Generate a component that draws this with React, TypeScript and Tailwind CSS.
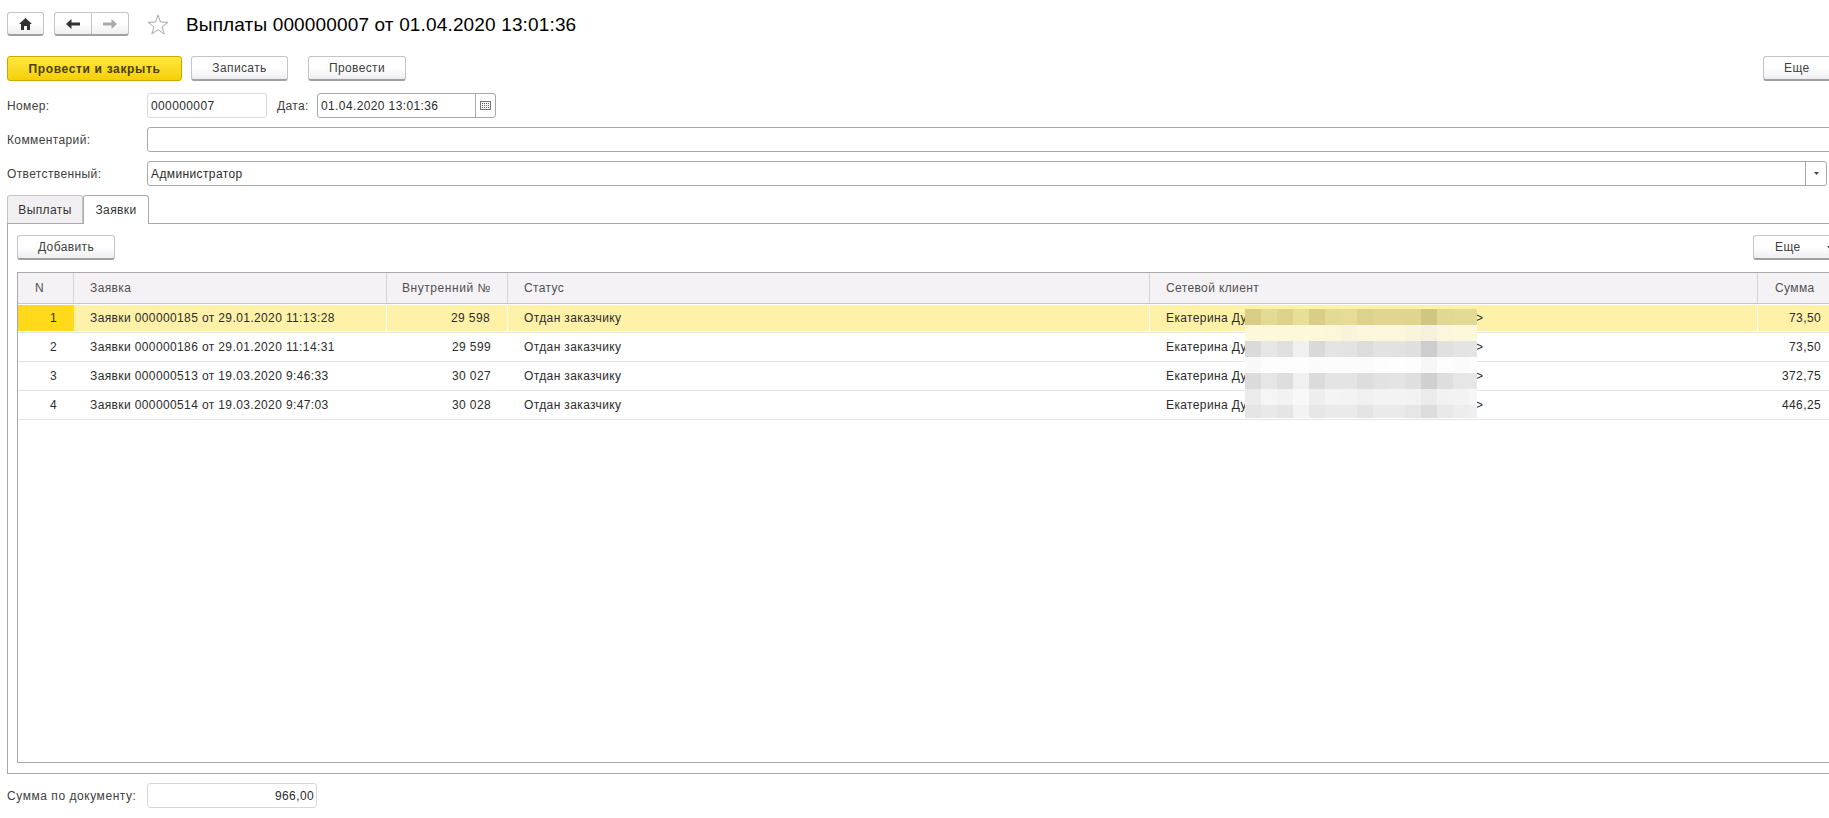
import React from 'react';

const font = "font-['Liberation_Sans',Arial,sans-serif]";

const rows = [
    { n: '1', doc: 'Заявки 000000185 от 29.01.2020 11:13:28', num: '29 598', sum: '73,50', active: true },
    { n: '2', doc: 'Заявки 000000186 от 29.01.2020 11:14:31', num: '29 599', sum: '73,50', active: false },
    { n: '3', doc: 'Заявки 000000513 от 19.03.2020 9:46:33', num: '30 027', sum: '372,75', active: false },
    { n: '4', doc: 'Заявки 000000514 от 19.03.2020 9:47:03', num: '30 028', sum: '446,25', active: false },
];

// замазанная часть имени клиента
const mosaic = [
    ['#d8cd85', '#e3da95', '#dcd28a', '#e8df97', '#d8ce86', '#e3da95', '#e6dc96', '#dcd28c', '#e0d692', '#e0d692', '#dfd58f', '#cfc684', '#e1d895', '#e3da96', '#e3da96'],
    ['#fdf8da', '#fdf8da', '#fdf8da', '#fdf8da', '#fdf8da', '#fcf7da', '#f8f3da', '#fcf7dc', '#fcf7dc', '#fbf6dc', '#f9f5dc', '#f5f1dc', '#fcf7dc', '#fdf8da', '#fdf8da'],
    ['#dadada', '#e6e6e6', '#e0e0e0', '#f0f0f0', '#d9d9d9', '#e4e4e4', '#e3e3e3', '#dcdcdc', '#e2e2e2', '#e2e2e2', '#dfdfdf', '#cdcdcd', '#e0e0e0', '#e4e4e4', '#e4e4e4'],
    ['#f8f8f8', '#fdfdfd', '#fdfdfd', '#fdfdfd', '#fbfbfb', '#fcfcfc', '#fcfcfc', '#fbfbfb', '#fdfdfd', '#fefefe', '#fdfdfd', '#f7f7f7', '#fdfdfd', '#fbfbfb', '#fdfdfd'],
    ['#dbdbdb', '#e6e6e6', '#dedede', '#f0f0f0', '#dbdbdb', '#e4e4e4', '#e4e4e4', '#dddddd', '#e2e2e2', '#e4e4e4', '#dfdfdf', '#d0d0d0', '#dedede', '#e6e6e6', '#e6e6e6'],
    ['#ececec', '#f5f5f5', '#f2f2f2', '#f8f8f8', '#eeeeee', '#f4f4f4', '#f3f3f3', '#f0f0f0', '#f3f3f3', '#f3f3f3', '#f2f2f2', '#ebebeb', '#f2f2f2', '#f3f3f3', '#f6f6f6'],
    ['#e5e5e5', '#e9e9e9', '#e5e5e5', '#f3f3f3', '#e7e7e7', '#eaeaea', '#eaeaea', '#e4e4e4', '#eaeaea', '#eaeaea', '#e6e6e6', '#dcdcdc', '#e9e9e9', '#ededed', '#efefef'],
];

function Btn({ children, className = '' }: { children: React.ReactNode; className?: string }) {
    return (
        <div className={`h-[25px] shrink-0 flex items-center justify-center border border-[#c4c4c4] border-b-2 border-b-[#a0a0a0] rounded-[3px] bg-gradient-to-b from-white via-white to-[#efedf0] text-[#404040] ${className}`}>
            {children}
        </div>
    );
}

function Field({ children, className = '' }: { children?: React.ReactNode; className?: string }) {
    return (
        <div className={`h-[25px] flex items-center pl-[3px] border border-[#a9a9a9] rounded-[3px] bg-white text-[#2c2c2c] ${className}`}>
            {children}
        </div>
    );
}

export default function App() {
    return (
        <div className={`w-[1829px] h-[818px] overflow-hidden bg-white text-[12px] leading-none tracking-[0.38px] ${font}`}>
            <div className="w-[1860px] pl-[7px]">
                {/* Шапка */}
                <div className="h-[56px] pt-[12px] flex items-start">
                    <Btn className="!h-[24px] w-[37px]">
                        <svg width="13" height="12" viewBox="0 0 13 12">
                            <path d="M6.5 0 L13 6 H11 V12 H8 V8 H5 V12 H2 V6 H0 Z" fill="#333" />
                        </svg>
                    </Btn>
                    <div className="ml-[10px] h-[24px] w-[75px] flex border border-[#c4c4c4] border-b-2 border-b-[#a0a0a0] rounded-[3px] bg-gradient-to-b from-white via-white to-[#efedf0]">
                        <div className="w-[37px] flex items-center justify-center border-r border-[#c4c4c4]">
                            <svg width="14" height="10" viewBox="0 0 14 10">
                                <path d="M5.5 0 L0 5 L5.5 10 V6.5 H14 V3.5 H5.5 Z" fill="#333" />
                            </svg>
                        </div>
                        <div className="flex-1 flex items-center justify-center">
                            <svg width="14" height="10" viewBox="0 0 14 10">
                                <path d="M8.5 0 L14 5 L8.5 10 V6.5 H0 V3.5 H8.5 Z" fill="#aaa" />
                            </svg>
                        </div>
                    </div>
                    <svg className="ml-[18px] mt-[2px]" width="22" height="21" viewBox="0 0 22 21">
                        <path d="M11 1 L13.5 8.1 L21 8.3 L15 12.8 L17.2 20 L11 15.7 L4.8 20 L7 12.8 L1 8.3 L8.5 8.1 Z" fill="none" stroke="#a8a8a8" />
                    </svg>
                    <span className="ml-[17px] mt-[3px] text-[19px] leading-[20px] tracking-[0.15px] text-black">Выплаты 000000007 от 01.04.2020 13:01:36</span>
                </div>

                {/* Команды */}
                <div className="h-[25px] flex">
                    <div className="w-[175px] h-[25px] shrink-0 flex items-center justify-center border border-[#c9a800] rounded-[3px] bg-gradient-to-b from-[#ffe83a] to-[#f5cf00] font-bold tracking-[0.65px] text-[#4a4000]">
                        Провести и закрыть
                    </div>
                    <Btn className="ml-[9px] w-[97px]">Записать</Btn>
                    <Btn className="ml-[20px] w-[98px]">Провести</Btn>
                    <Btn className="ml-[1357px] w-[90px] !justify-start pl-[20px]">Еще</Btn>
                </div>

                {/* Реквизиты */}
                <div className="mt-[12px] flex items-center">
                    <span className="w-[140px] text-[#404040]">Номер:</span>
                    <Field className="w-[120px] border-[#d8d8d8]">000000007</Field>
                    <span className="ml-[10px] w-[40px] text-[#404040]">Дата:</span>
                    <Field className="w-[179px]">
                        <span className="flex-1">01.04.2020 13:01:36</span>
                        <span className="w-[20px] h-full flex items-center justify-center border-l border-[#a9a9a9]">
                            <svg width="11" height="9" viewBox="0 0 11 9" shapeRendering="crispEdges">
                                <rect x="0.5" y="0.5" width="10" height="8" fill="#f4f4f4" stroke="#777" />
                                <path d="M2 2.5 H9 M2 4.5 H9 M2 6.5 H9" stroke="#666" strokeDasharray="1 1" />
                            </svg>
                        </span>
                    </Field>
                </div>
                <div className="mt-[9px] flex items-center">
                    <span className="w-[140px] text-[#404040]">Комментарий:</span>
                    <Field className="w-[1710px]" />
                </div>
                <div className="mt-[9px] flex items-center">
                    <span className="w-[140px] text-[#404040]">Ответственный:</span>
                    <Field className="w-[1680px]">
                        <span className="flex-1">Администратор</span>
                        <span className="w-[21px] h-full flex items-center justify-center border-l border-[#a9a9a9]">
                            <svg width="5" height="3" viewBox="0 0 5 3">
                                <path d="M0 0 H5 L2.5 3 Z" fill="#444" />
                            </svg>
                        </span>
                    </Field>
                </div>

                {/* Вкладки */}
                <div className="mt-[9px] h-[29px] flex items-end border-b border-[#a9a9a9]">
                    <div className="w-[76px] h-[28px] flex items-center justify-center border border-b-0 border-[#c4c4c4] rounded-t-[3px] bg-[#f1eff2] text-[#333]">Выплаты</div>
                    <div className="w-[66px] h-[29px] -mb-px flex items-center justify-center border border-b-0 border-[#a9a9a9] rounded-t-[3px] bg-white text-[#333]">Заявки</div>
                </div>
                <div className="h-[550px] px-[9px] pt-[11px] border-l border-b border-[#a9a9a9]">
                    <div className="flex">
                        <Btn className="w-[98px]">Добавить</Btn>
                        <Btn className="ml-[1638px] w-[90px] !justify-start pl-[21px]">
                            Еще
                            <svg className="ml-[26px]" width="5" height="3" viewBox="0 0 5 3">
                                <path d="M0 0 H5 L2.5 3 Z" fill="#444" />
                            </svg>
                        </Btn>
                    </div>

                    {/* Таблица */}
                    <div className="relative mt-[12px] h-[491px] border-l border-t border-b border-[#a9a9a9] text-[#2c2c2c]">
                        <div className="h-[31px] flex bg-[#f5f2f6] border-b border-[#c8c8c8] text-[#505050]">
                            <div className="w-[56px] flex items-center pl-[17px] border-r border-[#d4d4d4]">N</div>
                            <div className="w-[313px] flex items-center pl-[16px] border-r border-[#d4d4d4]">Заявка</div>
                            <div className="w-[121px] flex items-center justify-end pr-[16px] border-r border-[#d4d4d4] tracking-[0.55px]">Внутренний №</div>
                            <div className="w-[642px] flex items-center pl-[16px] border-r border-[#d4d4d4]">Статус</div>
                            <div className="w-[608px] flex items-center pl-[16px] border-r border-[#d4d4d4]">Сетевой клиент</div>
                            <div className="flex-1 flex items-center pl-[17px]">Сумма</div>
                        </div>
                        <div className="h-[1px] bg-white" />
                        {rows.map((r) => {
                            const sep = r.active ? 'border-r border-white' : '';
                            return (
                                <div key={r.n} className={`${r.active ? 'h-[28px] pb-px bg-[#fff2a8] bg-clip-content' : 'h-[29px] bg-white'} flex border-b border-[#e4e4e4]`}>
                                    <div className={`w-[56px] flex items-center justify-end pr-[17px] ${r.active ? 'bg-[#ffd91a]' : ''}`}>{r.n}</div>
                                    <div className={`w-[313px] flex items-center pl-[16px] ${sep}`}>{r.doc}</div>
                                    <div className={`w-[121px] flex items-center justify-end pr-[17px] ${sep}`}>{r.num}</div>
                                    <div className={`w-[642px] flex items-center pl-[16px] ${sep}`}>Отдан заказчику</div>
                                    <div className={`w-[608px] flex items-center pl-[16px] ${sep}`}>
                                        <span className="w-[310px]">Екатерина Ду</span>
                                        &gt;
                                    </div>
                                    <div className="w-[65px] flex items-center justify-end pr-[2px]">{r.sum}</div>
                                </div>
                            );
                        })}
                        <svg className="absolute left-[1227px] top-[36px]" width="232" height="109" viewBox="0 0 232 109" shapeRendering="crispEdges">
                            {mosaic.map((line, y) =>
                                line.map((c, x) => <rect key={`${y}-${x}`} x={x * 16} y={y * 16} width="16" height="16" fill={c} />),
                            )}
                        </svg>
                    </div>
                </div>

                {/* Итог */}
                <div className="mt-[9px] flex items-center">
                    <span className="w-[140px] text-[#404040] tracking-[0.55px]">Сумма по документу:</span>
                    <Field className="w-[170px] justify-end pr-[2px] border-[#d8d8d8]">966,00</Field>
                </div>
            </div>
        </div>
    );
}
